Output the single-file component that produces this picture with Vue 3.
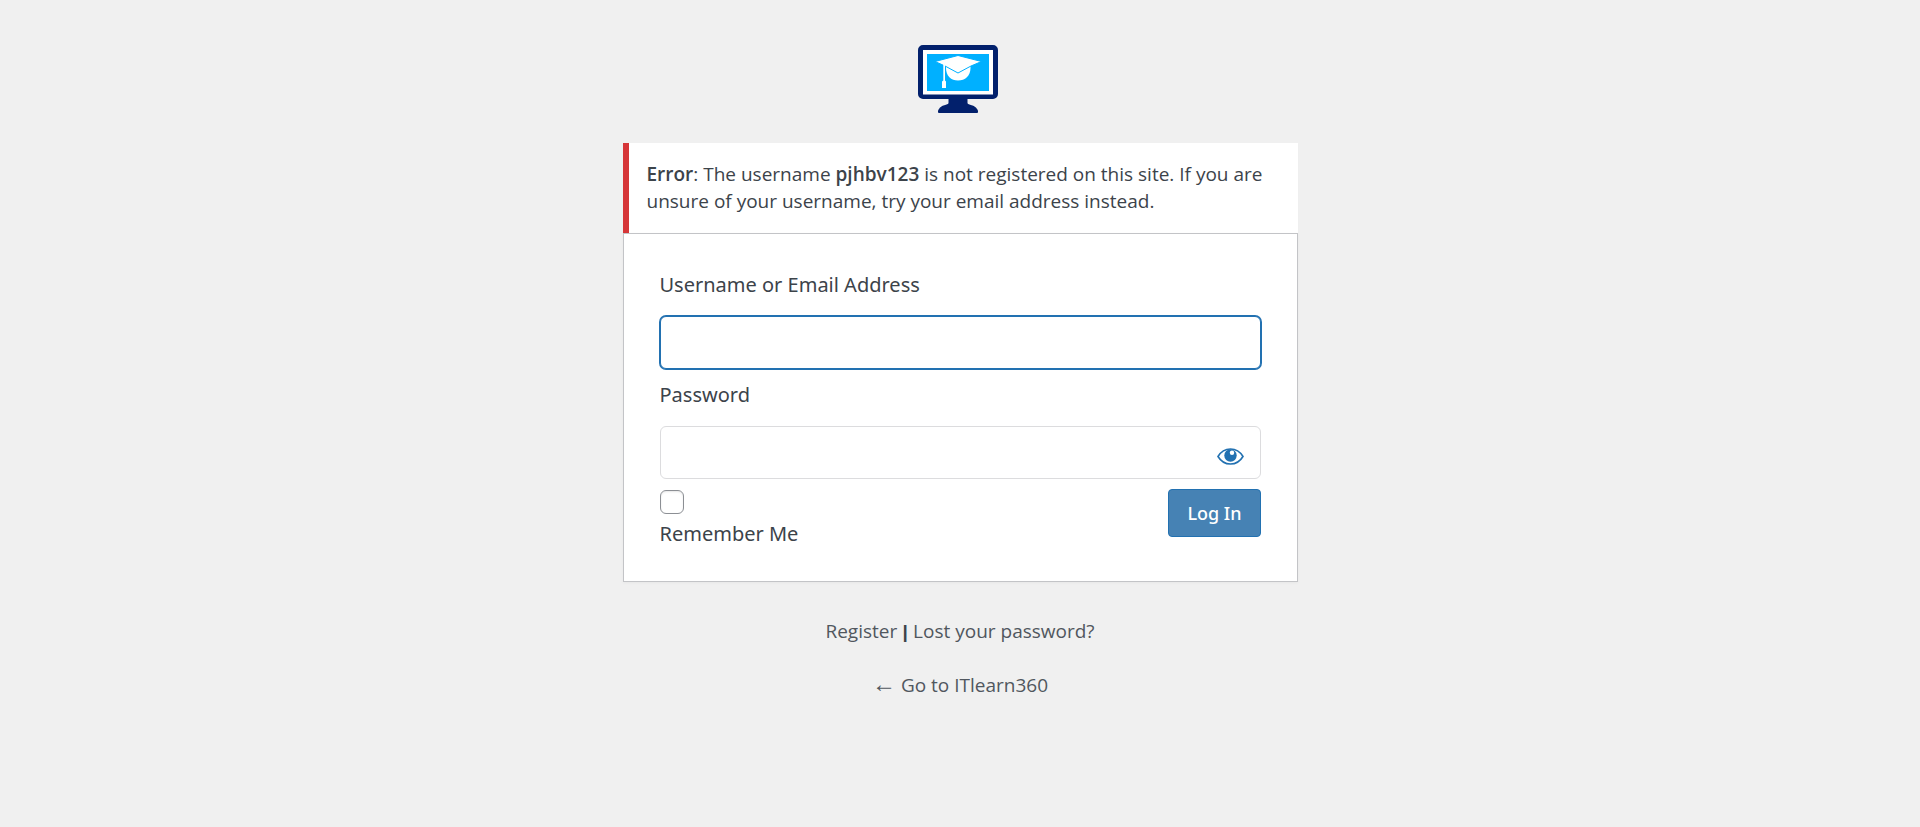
<script setup>
import { ref, onMounted } from 'vue'

const username = ref('')
const password = ref('')
const remember = ref(false)
const reveal = ref(false)
const userField = ref(null)

onMounted(() => userField.value.focus())
</script>

<template>
  <main class="login">
    <h1 class="brand">
      <a href="#" aria-label="ITlearn360">
        <svg class="logo" viewBox="0 0 84 68" aria-hidden="true">
          <path fill="#02206c" d="M5 0h70a5 5 0 0 1 5 5v44a5 5 0 0 1-5 5H49.500v4c0 2 8 2 9.500 6 1 1 1 2 1 3 0 1-1 1-2 1H22c-1 0-2 0-2-1 0-1 0-2 1-3 1.500-4 9.500-4 9.500-6v-4H5a5 5 0 0 1-5-5V5a5 5 0 0 1 5-5z" />
          <path fill="#fff" d="M5 5h70v44.500H5z" />
          <path fill="#00b0ff" d="M9 9h62v37H9z" />
          <path fill="#fff" d="M28 20v3c0 8 5 12.500 12 12.500S52.500 31 52.500 23v-3z" />
          <path fill="#fff" stroke="#00b0ff" stroke-width="1" d="M17 16.500 40 10.500l23.500 6L53 21l-13 7L27 21z" />
          <path fill="#fff" d="M25.300 19h1.700v16.500l1 1V43h-4v-6.500l1.300-1z" />
        </svg>
      </a>
    </h1>

    <div class="notice" role="alert">
      <strong>Error</strong>: The username <strong>pjhbv123</strong> is not registered on this site. If you are unsure of your username, try your email address instead.
    </div>

    <form class="card" @submit.prevent>
      <div class="field">
        <label for="user">Username or Email Address</label>
        <input id="user" ref="userField" v-model="username" class="box" type="text" autocomplete="username" />
      </div>
      <div class="field">
        <label for="pass">Password</label>
        <div class="secret">
          <input id="pass" v-model="password" class="box" :type="reveal ? 'text' : 'password'" autocomplete="current-password" />
          <button class="eye" type="button" aria-label="Show password" @click="reveal = !reveal">
            <svg viewBox="0 0 27 17" aria-hidden="true">
              <path fill="none" stroke="#2271b1" stroke-width="1.600" d="M1 8.500C4 3.500 8 1 13.500 1S23 3.500 26 8.500C23 13.500 19 16 13.500 16S4 13.500 1 8.500z" />
              <circle cx="13.500" cy="7.500" r="6.200" fill="#2271b1" />
              <circle cx="15" cy="4.800" r="2.200" fill="#fff" />
            </svg>
          </button>
        </div>
      </div>
      <div class="actions">
        <div class="remember">
          <input id="remember" v-model="remember" type="checkbox" />
          <label for="remember">Remember Me</label>
        </div>
        <button class="submit" type="submit">Log In</button>
      </div>
    </form>

    <p class="links"><a href="#">Register</a><span class="bar"> | </span><a href="#">Lost your password?</a></p>
    <p class="links"><a href="#"><span class="arrow">←</span> Go to ITlearn360</a></p>
  </main>
</template>

<style>
body {
  background: #f0f0f0;
}
</style>

<style scoped>
.login {
  box-sizing: border-box;
  max-width: 675px;
  margin: 0 auto;
  padding: 45px 0 30px;
  color: #3c434a;
  font-family: "Open Sans", "Noto Sans", sans-serif;
  font-size: 19px;
  line-height: 27px;
}
.login * {
  box-sizing: border-box;
}
.brand {
  display: flex;
  justify-content: center;
  margin: 0 0 30px;
}
.brand a,
.logo {
  display: block;
}
.logo {
  width: 84px;
  height: 68px;
}
.notice {
  padding: 18px;
  background: #fff;
  border-left: 6px solid #d63638;
  box-shadow: 0 1px 1px rgba(0, 0, 0, 0.04);
}
.notice strong {
  font-weight: 600;
}
.card {
  padding: 36px 36px 33px;
  background: #fff;
  border: 1px solid #c3c4c7;
  box-shadow: 0 1px 3px rgba(0, 0, 0, 0.04);
}
.field {
  margin-bottom: 10px;
}
.field label,
.remember label {
  font-family: "Noto Sans", "Open Sans", sans-serif;
  font-size: 20px;
}
.field label {
  display: block;
  margin-bottom: 16px;
  line-height: 30px;
}
.field + .field {
  margin-top: 11px;
}
.field:first-child {
  margin-bottom: 0;
}
.box {
  display: block;
  width: 100%;
  height: 53px;
  padding: 0 12px;
  background: #fff;
  border: 1px solid #dcdcde;
  border-radius: 6px;
  outline: none;
  color: #2c3338;
  font: inherit;
  caret-color: transparent;
}
.box:focus {
  border-color: #2271b1;
  box-shadow: 0 0 0 1px #2271b1;
}
.secret {
  position: relative;
}
.secret .box {
  padding-right: 56px;
}
.eye {
  position: absolute;
  top: 4px;
  right: 5px;
  display: flex;
  align-items: center;
  justify-content: center;
  width: 50px;
  height: 53px;
  padding: 0;
  background: none;
  border: 0;
  cursor: pointer;
}
.eye svg {
  width: 27px;
  height: 17px;
}
.actions {
  display: flex;
  align-items: flex-start;
  justify-content: space-between;
}
.remember {
  display: flex;
  flex-direction: column;
  padding-top: 1px;
}
.remember input {
  appearance: none;
  width: 24px;
  height: 24px;
  margin: 0 0 6px;
  background: #fff;
  border: 1px solid #8c8f94;
  border-radius: 6px;
  box-shadow: inset 0 1px 2px rgba(0, 0, 0, 0.1);
}
.remember input:checked {
  background: #2271b1;
}
.remember label {
  line-height: 28px;
}
.submit {
  height: 48px;
  padding: 0 18px;
  background: #4682b4;
  border: 1px solid #2271b1;
  border-radius: 4px;
  color: #fff;
  font-family: "Noto Sans", "Open Sans", sans-serif;
  font-size: 18px;
  font-weight: 500;
  cursor: pointer;
}
.links {
  margin: 36px 0 0;
  text-align: center;
}
.links + .links {
  margin-top: 27px;
}
.links a {
  color: #50575e;
  text-decoration: none;
}
.bar {
  font-family: "Liberation Sans", sans-serif;
  font-weight: 700;
}
.arrow {
  font-family: "Liberation Serif", serif;
  font-size: 24px;
  line-height: 1;
}
</style>
